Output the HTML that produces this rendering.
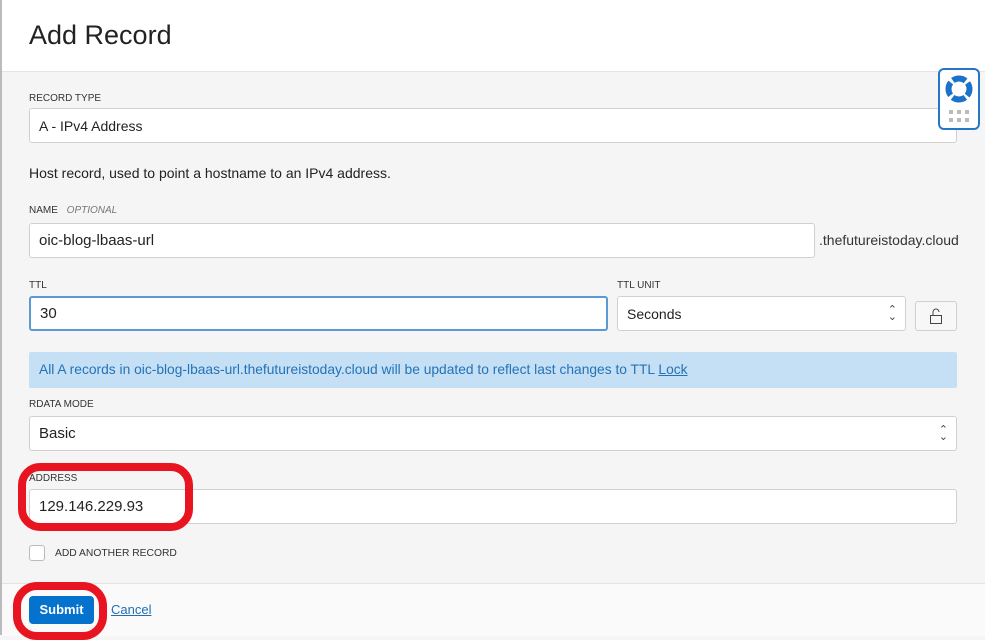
<!DOCTYPE html>
<html><head><style>
body{margin:0;width:985px;height:635px;overflow:hidden;font-family:"Liberation Sans",sans-serif;background:#f5f5f5;position:relative;color:#222}
.a{position:absolute}
.lbl{position:absolute;font-size:10px;color:#333;left:29px}
.box{position:absolute;background:#fff;border:1px solid #d0d0d0;border-radius:3px;box-sizing:border-box;font-size:15px;color:#222;padding-left:9px;display:flex;align-items:center}
.arr{position:absolute;right:8px;top:50%;transform:translateY(-50%);font-size:11px;line-height:7px;color:#444;text-align:center}
.red{position:absolute;border:8px solid #e8141f;border-radius:22px;box-sizing:border-box}
</style></head><body>
<div class="a" style="left:0;top:0;width:985px;height:71px;background:#fff;border-bottom:1px solid #e4e4e4"></div>
<div class="a" style="left:0;top:0;width:2px;height:635px;background:#bbb"></div>
<div class="a" style="left:29px;top:20px;font-size:27px;color:#222">Add Record</div>
<div class="lbl" style="top:93px">RECORD TYPE</div>
<div class="box" style="left:29px;top:108px;width:928px;height:35px;font-size:14px">A - IPv4 Address</div>
<div class="a" style="left:29px;top:165px;font-size:14px">Host record, used to point a hostname to an IPv4 address.</div>
<div class="lbl" style="top:205px">NAME <i style="color:#777;margin-left:6px">OPTIONAL</i></div>
<div class="box" style="left:29px;top:223px;width:786px;height:35px">oic-blog-lbaas-url</div>
<div class="a" style="left:819px;top:232px;font-size:14px;color:#333">.thefutureistoday.cloud</div>
<div class="lbl" style="top:280px">TTL</div>
<div class="lbl" style="top:280px;left:617px">TTL UNIT</div>
<div class="box" style="left:29px;top:296px;width:579px;height:35px;border:2px solid #5b9bd5">30</div>
<div class="box" style="left:617px;top:296px;width:289px;height:35px;font-size:14px">Seconds<div class="arr">⌃<br>⌄</div></div>
<div class="box" style="left:915px;top:301px;width:42px;height:30px;background:#f7f7f7;justify-content:center;padding:0">
<svg width="16" height="18" viewBox="0 0 16 18"><rect x="2.5" y="8.5" width="11" height="8" fill="none" stroke="#444"/><path d="M5 8.5V5a3 3 0 0 1 6 0" fill="none" stroke="#444"/></svg></div>
<div class="a" style="left:29px;top:352px;width:928px;height:36px;background:#c5dff4;border-radius:2px;font-size:13.8px;color:#2373b8;line-height:36px;padding-left:10px;box-sizing:border-box;white-space:nowrap">All A records in oic-blog-lbaas-url.thefutureistoday.cloud will be updated to reflect last changes to TTL <u>Lock</u></div>
<div class="lbl" style="top:399px">RDATA MODE</div>
<div class="box" style="left:29px;top:416px;width:928px;height:35px">Basic<div class="arr">⌃<br>⌄</div></div>
<div class="lbl" style="top:473px">ADDRESS</div>
<div class="box" style="left:29px;top:489px;width:928px;height:35px">129.146.229.93</div>
<div class="a" style="left:29px;top:545px;width:16px;height:16px;border:1px solid #bbb;border-radius:3px;background:#fff;box-sizing:border-box"></div>
<div class="a" style="left:55px;top:548px;font-size:10.3px;color:#333">ADD ANOTHER RECORD</div>
<div class="a" style="left:2px;top:583px;width:983px;height:52px;background:#fafafa;border-top:1px solid #e4e4e4"></div>
<div class="a" style="left:29px;top:596px;width:65px;height:28px;background:#0572ce;border-radius:4px;color:#fff;font-size:13px;font-weight:bold;text-align:center;line-height:28px">Submit</div>
<div class="a" style="left:111px;top:602px;font-size:13px;color:#1f6fb5;text-decoration:underline">Cancel</div>
<div class="red" style="left:18px;top:463px;width:175px;height:68px"></div>
<div class="red" style="left:13px;top:582px;width:94px;height:58px;border-radius:24px"></div>
<div class="a" style="left:938px;top:68px;width:42px;height:62px;background:#fff;border:2px solid #2577c6;border-radius:6px;box-sizing:border-box">
<svg width="38" height="58" viewBox="0 0 38 58"><circle cx="19" cy="19" r="10.5" fill="none" stroke="#1a73c8" stroke-width="6" stroke-dasharray="13.5 3" transform="rotate(53 19 19)"/>
<g fill="#bbb"><rect x="9" y="40" width="4" height="4"/><rect x="17" y="40" width="4" height="4"/><rect x="25" y="40" width="4" height="4"/><rect x="9" y="48" width="4" height="4"/><rect x="17" y="48" width="4" height="4"/><rect x="25" y="48" width="4" height="4"/></g></svg></div>
</body></html>
